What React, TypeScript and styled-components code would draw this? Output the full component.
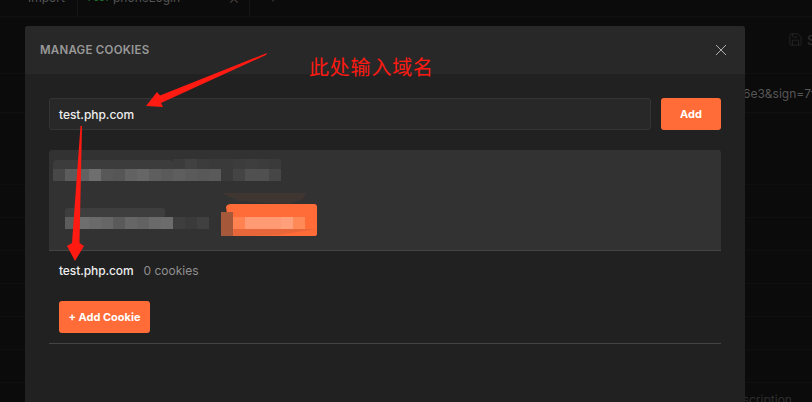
import React from "react";
import styled, { createGlobalStyle } from "styled-components";
import { Save } from "lucide-react";

const Global = createGlobalStyle`
  html, body { margin: 0; padding: 0; background: #0b0b0b; }
  * { box-sizing: border-box; }
`;

const Page = styled.div`
  position: relative;
  width: 812px;
  height: 402px;
  overflow: hidden;
  background: #0b0b0b;
  font-family: Inter, "Liberation Sans", sans-serif;
`;

const TabBar = styled.div`
  display: flex;
  height: 17px;
  padding-left: 28px;
  overflow: hidden;
  border-bottom: 1px solid #101010;
  font-size: 12px;
  line-height: 16px;
  color: #555;
`;

const Tab = styled.div<{ $w: number }>`
  display: flex;
  gap: 8px;
  width: ${(p) => p.$w}px;
  height: 26px;
  padding-left: ${(p) => (p.$w > 100 ? 10 : 0)}px;
  margin-top: -10px;
  flex: none;
  border-right: 1px solid #141414;
`;

const Method = styled.span`
  width: 17px;
  color: #1f6b2c;
  font-size: 8px;
  font-weight: 600;
`;

const TabClose = styled.span`
  margin-left: 40px;
  color: #444;
  font-size: 18px;
  font-weight: 300;
`;

const TabPlus = styled.span`
  margin: -10px 0 0 19px;
  color: #444;
`;

const Toolbar = styled.div`
  display: flex;
  align-items: center;
  gap: 4px;
  height: 57px;
  padding: 0 0 11px 788px;
  border-bottom: 1px solid #101010;
  color: #2b2b2b;
  font-size: 13px;
  font-weight: 500;
  overflow: hidden;
`;

const UrlRow = styled.div`
  display: flex;
  align-items: center;
  height: 39px;
  padding-left: 743px;
  overflow: hidden;
  border-bottom: 1px solid #101010;
  color: #565656;
  font-size: 12px;
  white-space: nowrap;
`;

const Spacer = styled.div`
  height: 39px;
`;

const GridRow = styled.div`
  height: 33px;
  border-bottom: 1px solid #0f0f0f;
`;

const LastRow = styled.div`
  padding: 10px 0 0 727px;
  color: #2e2e2e;
  font-size: 12px;
  white-space: nowrap;
  line-height: 14px;
`;

const Modal = styled.section`
  position: absolute;
  left: 25px;
  top: 26px;
  width: 720px;
  height: 400px;
  background: #212121;
  border-radius: 3px 3px 0 0;
`;

const ModalHeader = styled.header`
  display: flex;
  justify-content: space-between;
  align-items: center;
  height: 48px;
  padding: 0 18px 0 15px;
  background: #282828;
  border-radius: 3px 3px 0 0;
`;

const Title = styled.h2`
  margin: 0;
  font-size: 11.5px;
  font-weight: 600;
  letter-spacing: 0.25px;
  color: #999;
`;

const ModalBody = styled.div`
  padding: 24px 24px 0;
`;

const AddRow = styled.div`
  display: flex;
  gap: 10px;
`;

const Input = styled.div`
  flex: 1;
  display: flex;
  align-items: center;
  height: 32px;
  padding-left: 9px;
  background: #282828;
  border: 1px solid #353535;
  border-radius: 3px;
  color: #eee;
  font-size: 12px;
  font-weight: 500;
  letter-spacing: -0.05px;
`;

const Button = styled.button<{ $w: number }>`
  width: ${(p) => p.$w}px;
  height: 32px;
  padding: 0;
  border: 0;
  border-radius: 3px;
  background: #ff6c37;
  color: #fff;
  font-family: inherit;
  font-size: 11px;
  font-weight: 700;
`;

const Card = styled.div`
  position: relative;
  height: 101px;
  margin-top: 20px;
  background: #323232;
  border-bottom: 1px solid #444;
  border-radius: 3px 3px 0 0;
`;

const Smudge = styled.svg`
  position: absolute;
  left: 0;
  top: 0;
  display: block;
`;

const DomainRow = styled.div`
  display: flex;
  align-items: center;
  gap: 10px;
  height: 38px;
  margin-bottom: 2px;
  padding-left: 10px;
  font-size: 12px;
  letter-spacing: -0.1px;
`;

const Domain = styled.span`
  color: #eee;
  font-weight: 500;
`;

const Count = styled.span`
  color: #8f8f8f;
  letter-spacing: 0;
`;

const AddCookieWrap = styled.div`
  padding: 10px 0 10px 10px;
  border-bottom: 1px solid #444;
`;

const Annotations = styled.svg`
  position: absolute;
  left: 0;
  top: 0;
  display: block;
  pointer-events: none;
`;

const Note = styled.div`
  position: absolute;
  left: 309px;
  top: 52px;
  color: #ff1a12;
  font-family: "Noto Sans CJK SC", sans-serif;
  font-size: 20px;
  font-weight: 400;
  letter-spacing: 0.8px;
  line-height: 29px;
  white-space: nowrap;
`;

const row = (y: number, h: number, x: number, tones: string[], w = 12) =>
  tones.map((t, i) => <rect key={`${y}-${x}-${i}`} x={x + i * w} y={y} width={w} height={h} fill={t} />);

export default function App() {
  return (
    <Page>
      <Global />
      <TabBar>
        <Tab $w={50}>Import</Tab>
        <Tab $w={172}>
          <Method>POST</Method>
          <span>phoneLogin</span>
          <TabClose>×</TabClose>
        </Tab>
        <TabPlus>+</TabPlus>
      </TabBar>
      <Toolbar>
        <Save size={15} strokeWidth={1.2} style={{ flex: "none" }} />
        <span>Save</span>
      </Toolbar>
      <UrlRow>6e3&amp;sign=7f1a9c</UrlRow>
      <Spacer />
      <GridRow />
      <GridRow />
      <GridRow />
      <GridRow />
      <GridRow />
      <GridRow />
      <GridRow />
      <LastRow>Description</LastRow>

      <Modal>
        <ModalHeader>
          <Title>MANAGE COOKIES</Title>
          <svg width="12" height="12" viewBox="0 0 12 12">
            <path d="M1 1l10 10M11 1L1 11" stroke="#b0b0b0" strokeWidth="1" fill="none" />
          </svg>
        </ModalHeader>
        <ModalBody>
          <AddRow>
            <Input>test.php.com</Input>
            <Button $w={60}>Add</Button>
          </AddRow>
          <Card>
            <Smudge width="672" height="100" viewBox="49 150 672 100">
              <rect x="53" y="160" width="120" height="21" rx="4" fill="#3c3c3c" />
              {row(159, 10, 173, ["#3b3b3b", "#414141", "#3c3c3c", "#3a3a3a", "#3a3a3a", "#3c3c3c", "#3e3e3e", "#3c3c3c", "#3a3a3a"])}
              {row(169, 12, 53, ["#484848", "#5c5c5c", "#626262", "#6e6e6e", "#585858", "#565656", "#626262", "#666666", "#5e5e5e", "#5a5a5a", "#5e5e5e", "#5a5a5a", "#585858", "#5a5a5a"])}
              {row(169, 12, 221, ["#3a3a3a", "#444444", "#505050", "#505050", "#464646"])}
              <rect x="65" y="208" width="100" height="10" rx="3" fill="#3e3e3e" />
              {row(217, 12, 65, ["#5c5c5c", "#6e6e6e", "#6a6a6a", "#666666", "#5a5a5a", "#666666", "#626262", "#6a6a6a", "#6c6c6c"])}
              {row(217, 12, 173, ["#3e3e3e", "#3a3a3a", "#404040"])}
              <path d="M221 193h85l-3 6-14 5-50-3z" fill="#403631" />
              <path d="M226 207q1-3 5-3h83q3 0 3 3v27q0 2-3 2l-66 0h-18z" fill="#ff6c37" />
              <path d="M221 212h12v24h-12z" fill="#a6583a" />
              <path d="M233 229h14v7h-14zM247 229h70l-40 6-30 1z" fill="#e7663a" />
              {row(217, 12, 233, ["#ff8250", "#ff9a74", "#ff9a74", "#ff9a74", "#ffa07a", "#ff8a58"])}
            </Smudge>
          </Card>
          <DomainRow>
            <Domain>test.php.com</Domain>
            <Count>0 cookies</Count>
          </DomainRow>
          <AddCookieWrap>
            <Button $w={91}>+ Add Cookie</Button>
          </AddCookieWrap>
        </ModalBody>
      </Modal>

      <Annotations width="812" height="402" viewBox="0 0 812 402">
        <polygon points="267,53 160,95.5 157,92 146,106 163,107 161,103 266,55" fill="#ff1a12" />
        <polygon points="80.5,126 82,126 79.5,243 84,246 75,261 67,246 72,243" fill="#ff1a12" />
      </Annotations>
      <Note>此处输入域名</Note>
    </Page>
  );
}
